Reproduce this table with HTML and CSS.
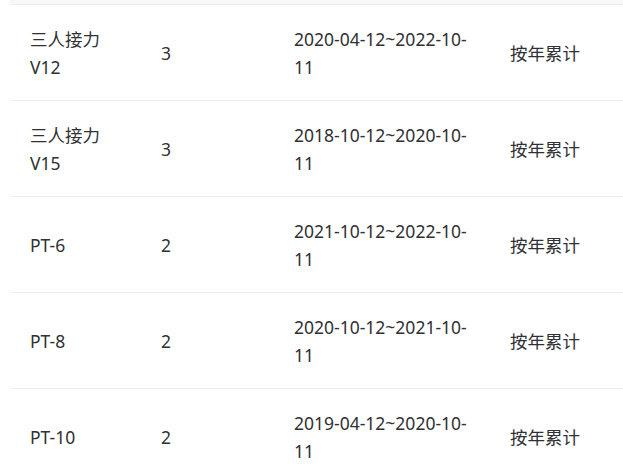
FILE: index.html
```html
<!DOCTYPE html>
<html lang="zh-CN">
<head>
<meta charset="utf-8">
<title>表格</title>
<link rel="stylesheet" href="styles.css">
</head>
<body>
<div class="table">
  <div class="head-strip"></div>
  <div class="row">
    <div class="cell">三人接力V12</div>
    <div class="cell">3</div>
    <div class="cell">2020-04-12~2022-10-11</div>
    <div class="cell">按年累计</div>
  </div>
  <div class="row">
    <div class="cell">三人接力V15</div>
    <div class="cell">3</div>
    <div class="cell">2018-10-12~2020-10-11</div>
    <div class="cell">按年累计</div>
  </div>
  <div class="row">
    <div class="cell">PT-6</div>
    <div class="cell">2</div>
    <div class="cell">2021-10-12~2022-10-11</div>
    <div class="cell">按年累计</div>
  </div>
  <div class="row">
    <div class="cell">PT-8</div>
    <div class="cell">2</div>
    <div class="cell">2020-10-12~2021-10-11</div>
    <div class="cell">按年累计</div>
  </div>
  <div class="row">
    <div class="cell">PT-10</div>
    <div class="cell">2</div>
    <div class="cell">2019-04-12~2020-10-11</div>
    <div class="cell">按年累计</div>
  </div>
</div>
</body>
</html>
```
FILE: styles.css
```css
html, body {
  margin: 0;
  padding: 0;
  overflow: hidden;
  background: #ffffff;
}
body {
  padding-left: 10px;
  font-family: "Noto Sans", "Noto Sans CJK SC", sans-serif;
  font-size: 17.5px;
  color: #303133;
}
.table {
  display: flex;
  flex-direction: column;
}
.head-strip {
  height: 4px;
  background: #f8f8f9;
  border-bottom: 1px solid #ebeef5;
}
.row {
  display: grid;
  grid-template-columns: 131px 133px 216px 1fr;
  box-sizing: border-box;
  height: 96px;
  border-bottom: 1px solid #ebeef5;
  align-items: center;
}
.cell {
  padding: 0 20px;
  line-height: 28px;
}
```
